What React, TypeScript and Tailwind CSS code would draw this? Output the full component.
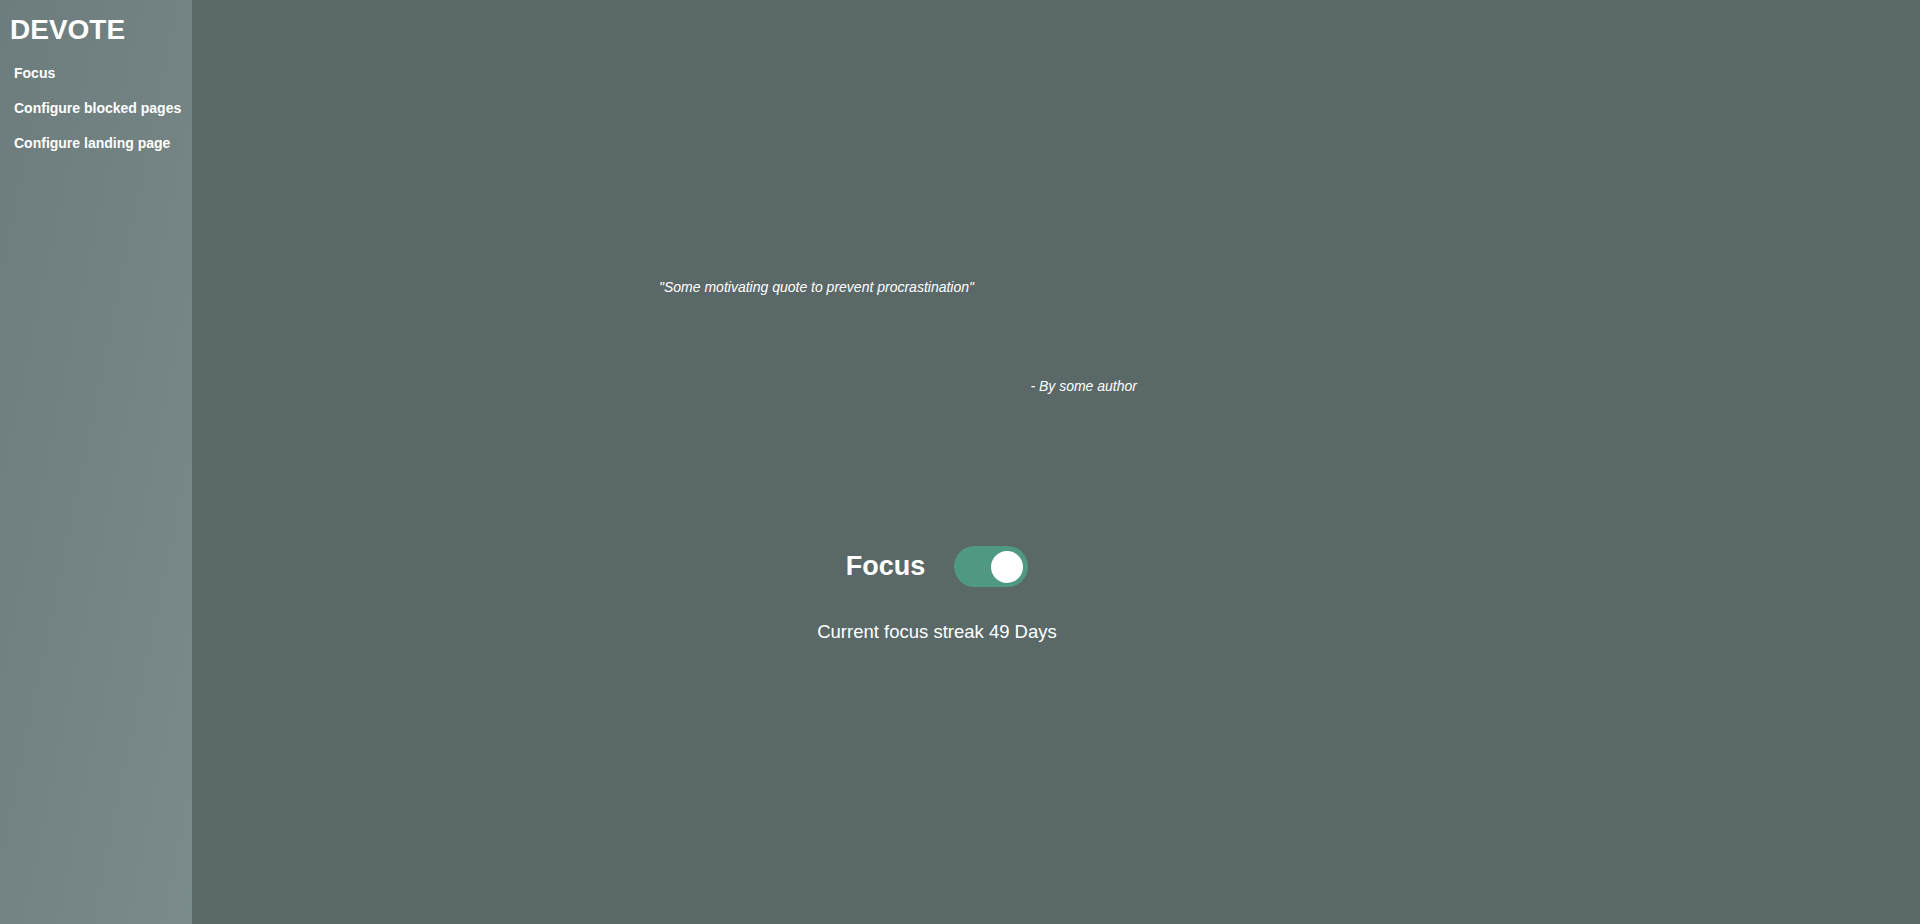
export default function App() {
  return (
    <div className="flex min-h-screen h-[924px] bg-[#5a6968] text-white font-['Liberation_Sans',Arial,sans-serif]">
      {/* Sidebar */}
      <aside className="w-[192px] shrink-0 bg-gradient-to-br from-[#6d7c7c] to-[#798b8a] pt-[14px] px-[10px]">
        <h1 className="text-[28px] font-bold leading-[32px]">DEVOTE</h1>
        <nav className="mt-[19px] flex flex-col gap-[19px] pl-[4px]">
          <a className="text-[14px] font-bold leading-[16px]">Focus</a>
          <a className="text-[14px] font-bold leading-[16px]">Configure blocked pages</a>
          <a className="text-[14px] font-bold leading-[16px]">Configure landing page</a>
        </nav>
      </aside>

      {/* Main content */}
      <main className="flex-1">
        <div className="ml-[467px] w-[556px] pt-[279px] flex flex-col">
          <p className="text-[14px] italic leading-[16px]">"Some motivating quote to prevent procrastination"</p>
          <p className="mt-[83px] self-end pr-[78px] text-[14px] italic leading-[16px]">- By some author</p>

          <div className="mt-[152px] flex items-center justify-center gap-[29px]">
            <span className="text-[27px] font-bold leading-[31px]">Focus</span>
            <button className="w-[74px] h-[41px] rounded-full bg-[#4f9984] flex items-center justify-end pr-[5px]">
              <span className="block w-[32px] h-[32px] rounded-full bg-white" />
            </button>
          </div>

          <p className="mt-[34px] text-center text-[18.5px] leading-[21px]">Current focus streak 49 Days</p>
        </div>
      </main>
    </div>
  );
}
